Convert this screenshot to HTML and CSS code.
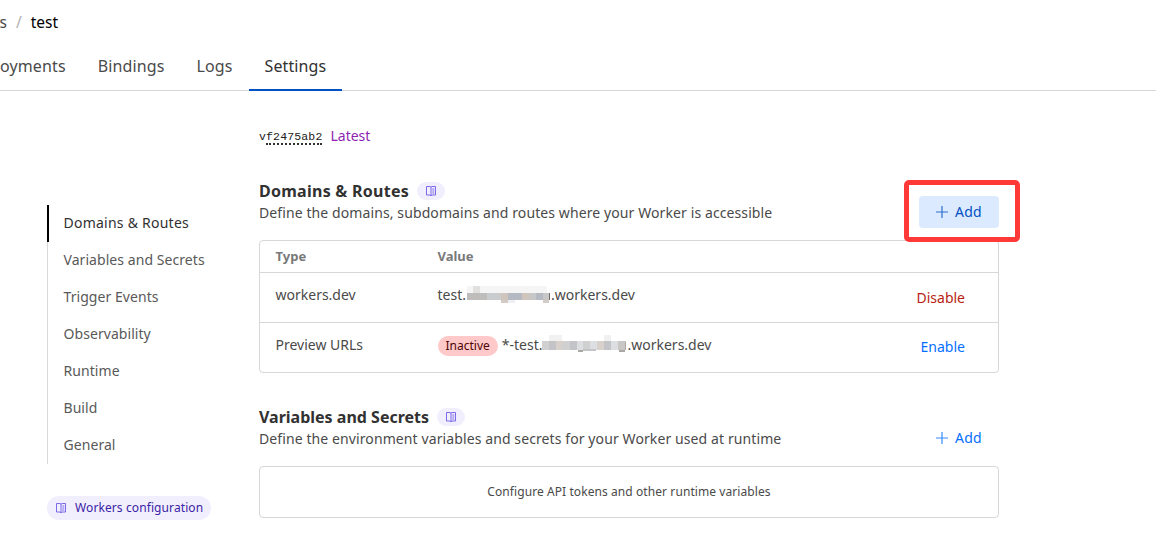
FILE: index.html
```
<!DOCTYPE html>
<html lang="en">
<head>
    <meta charset="UTF-8">
    <meta name="viewport" content="width=device-width, initial-scale=1.0">
    <title>test - Settings</title>
    <link rel="stylesheet" href="styles.css">
</head>
<body>
    <!-- Shared icons -->
    <svg class="sprite" aria-hidden="true">
        <symbol id="icon-book" viewBox="0 0 12 12">
            <path d="M1.500 1.500H5l1 .7 1-.7h3.500v8.500H7l-1 .8-1-.8H1.500zM6 2v8.500" fill="none" stroke="currentColor" stroke-width=".9"/>
            <path d="M7.300 4h2M7.300 6h2M7.300 8h2" stroke="currentColor" stroke-width=".9"/>
        </symbol>
        <symbol id="icon-plus" viewBox="0 0 12 12">
            <path d="M6 0v12M0 6h12" fill="none" stroke="currentColor" stroke-width="1.200"/>
        </symbol>
    </svg>

    <header class="topbar">
        <div class="breadcrumb">
            <span>s</span>
            <span class="slash">/</span>
            <span class="current">test</span>
        </div>
        <nav class="tabs">
            <a class="tab tab-first">oyments</a>
            <a class="tab">Bindings</a>
            <a class="tab">Logs</a>
            <a class="tab active">Settings</a>
        </nav>
    </header>

    <div class="layout">
        <aside class="sidebar">
            <nav class="side-nav">
                <a class="side-link active">Domains &amp; Routes</a>
                <a class="side-link">Variables and Secrets</a>
                <a class="side-link">Trigger Events</a>
                <a class="side-link">Observability</a>
                <a class="side-link">Runtime</a>
                <a class="side-link">Build</a>
                <a class="side-link">General</a>
            </nav>
            <a class="config-link">
                <svg class="icon"><use href="#icon-book"/></svg>
                Workers configuration
            </a>
        </aside>

        <main class="content">
            <div class="version">
                <span class="hash">v<span class="hash-id">f2475ab2</span></span>
                <span class="latest">Latest</span>
            </div>

            <!-- Domains & Routes -->
            <section class="section">
                <div class="section-head">
                    <div>
                        <h2 class="wide">Domains &amp; Routes <span class="doc-badge"><svg class="icon"><use href="#icon-book"/></svg></span></h2>
                        <p>Define the domains, subdomains and routes where your Worker is accessible</p>
                    </div>
                    <button class="add-btn highlighted"><svg class="plus"><use href="#icon-plus"/></svg>Add</button>
                </div>
                <div class="table">
                    <div class="row row-head">
                        <span>Type</span>
                        <span>Value</span>
                    </div>
                    <div class="row">
                        <span>workers.dev</span>
                        <span class="value">test.<svg class="mask" viewBox="0 0 85 18" shape-rendering="crispEdges">
                            <path fill="#f5f5f5" d="M1 1h80v7H1z"/>
                            <path fill="#e2e0df" d="M7 1h7v7H7z"/>
                            <path fill="#bfbdbb" d="M1 8h20v7H1z"/>
                            <path fill="#c9cbcd" d="M21 8h14v7H21z"/>
                            <path fill="#cfc5bd" d="M35 8h7v7h-7zM56 8h7v7h-7z"/>
                            <path fill="#b5bac2" d="M42 8h14v7H42zM70 8h7v7h-7z"/>
                            <path fill="#c7c7c7" d="M63 8h7v7h-7zM77 8h6v7h-6z"/>
                            <path fill="#d4cbc7" d="M35 15h7v3h-7zM77 15h6v3h-6z"/>
                            <path fill="#edf1f6" d="M42 15h7v3h-7z"/>
                            <path fill="#7a6d67" d="M83 8h1v7h-1z"/>
                        </svg>.workers.dev</span>
                        <a class="action disable">Disable</a>
                    </div>
                    <div class="row">
                        <span>Preview URLs</span>
                        <span class="value"><span class="status">Inactive</span>*-test.<svg class="mask" viewBox="0 0 85 18" shape-rendering="crispEdges">
                            <path fill="#f1f1f1" d="M7 0h13v6H7zM62 0h7v6h-7z"/>
                            <path fill="#d0d0d0" d="M0 6h7v9H0zM20 6h8v9h-8zM41 6h7v9h-7z"/>
                            <path fill="#c3c4c7" d="M7 6h7v9H7zM28 6h7v9h-7zM62 6h7v9h-7z"/>
                            <path fill="#d8d0ca" d="M14 6h6v9h-6zM55 6h7v9h-7z"/>
                            <path fill="#dcdee1" d="M35 6h6v9h-6zM48 6h7v9h-7zM69 6h7v9h-7z"/>
                            <path fill="#c8c7c6" d="M76 6h8v9h-8z"/>
                            <path fill="#aaa7a5" d="M36 15h5v2h-5zM77 15h6v2h-6zM83 7h1v8h-1z"/>
                            <path fill="#c3c4c7" d="M41 14h13v2H41z"/>
                        </svg>.workers.dev</span>
                        <a class="action enable">Enable</a>
                    </div>
                </div>
            </section>

            <!-- Variables and Secrets -->
            <section class="section section-last">
                <div class="section-head">
                    <div>
                        <h2>Variables and Secrets <span class="doc-badge"><svg class="icon"><use href="#icon-book"/></svg></span></h2>
                        <p>Define the environment variables and secrets for your Worker used at runtime</p>
                    </div>
                    <button class="add-btn"><svg class="plus"><use href="#icon-plus"/></svg>Add</button>
                </div>
                <div class="empty">Configure API tokens and other runtime variables</div>
            </section>
        </main>
    </div>
</body>
</html>
```
FILE: styles.css
```
* {
    box-sizing: border-box;
}

body {
    font-family: 'Noto Sans', sans-serif;
    font-size: 14px;
    line-height: 20px;
    margin: 0;
    background: #fff;
    color: #4a4a4a;
}

.sprite {
    display: none;
}

.topbar {
    height: 91px;
    border-bottom: 1px solid #d5d7d8;
}

.breadcrumb {
    display: flex;
    gap: 9px;
    height: 43px;
    align-items: center;
    font-size: 15.5px;
    margin-left: -0.5px;
}

.slash {
    color: #b0b0b0;
}

.current {
    color: #000;
}

.tabs {
    display: flex;
    height: 48px;
}

.tab {
    padding: 13px 16px 0;
    font-size: 16px;
    letter-spacing: 0.12px;
    border-bottom: 2px solid transparent;
}

.tab-first {
    padding-left: 0;
}

.tab.active {
    color: #313131;
    border-bottom-color: #0051c3;
}

.layout {
    display: grid;
    grid-template-columns: 212px 740px;
    padding-left: 47px;
}

/* Sidebar */
.sidebar {
    padding-top: 114px;
}

.side-nav {
    border-left: 1px solid #d9d9d9;
    height: 259px;
}

.side-link {
    display: block;
    height: 37px;
    line-height: 36px;
    padding-left: 15.5px;
    color: #595959;
    letter-spacing: 0.06px;
}

.side-link.active {
    margin-left: -1px;
    border-left: 2px solid #000;
    padding-left: 14.5px;
    color: #313131;
    letter-spacing: 0.24px;
}

.config-link {
    display: inline-flex;
    align-items: center;
    gap: 8px;
    height: 24px;
    margin-top: 32px;
    padding: 0 8px;
    border-radius: 12px;
    background: #f1effe;
    color: #3a23a5;
    font-size: 12px;
    letter-spacing: 0.1px;
}

.icon {
    width: 12px;
    height: 12px;
    color: #6e5ae6;
}

/* Content */
.version {
    display: flex;
    align-items: center;
    gap: 8px;
    height: 20px;
    margin-top: 35px;
}

.hash {
    font-family: 'Liberation Mono', monospace;
    font-size: 11.5px;
    letter-spacing: 0.15px;
    color: #222;
    line-height: 12px;
    padding-top: 2px;
}

.hash-id {
    border-bottom: 2px dotted #313131;
}

.latest {
    color: #8e1fb0;
}

.section {
    height: 226px;
    padding-top: 35px;
}

.section-last {
    height: auto;
}

.section-head {
    display: flex;
    justify-content: space-between;
    height: 59px;
}

h2 {
    display: flex;
    align-items: center;
    gap: 8px;
    height: 20px;
    margin: 0;
    font-size: 16px;
    font-weight: 700;
    color: #313131;
}

h2.wide {
    letter-spacing: 0.26px;
}

p {
    margin: 2px 0 0;
    letter-spacing: 0.1px;
}

.doc-badge {
    display: flex;
    align-items: center;
    justify-content: center;
    width: 28px;
    height: 18px;
    border-radius: 9px;
    background: #f1effe;
}

.add-btn {
    position: relative;
    display: flex;
    align-items: center;
    gap: 7px;
    width: 80px;
    height: 32px;
    margin-top: 15px;
    padding: 0 0 0 17px;
    border: 0;
    border-radius: 4px;
    background: none;
    color: #056fff;
    font: inherit;
    letter-spacing: 0.2px;
}

.add-btn.highlighted {
    background: #dceaff;
    color: #0051c3;
}

/* Marker frame around the button */
.add-btn.highlighted::after {
    content: '';
    position: absolute;
    top: -16px;
    left: -15px;
    width: 106px;
    height: 52px;
    border: 5px solid #ff3838;
    border-radius: 5px;
}

.plus {
    width: 12px;
    height: 12px;
    opacity: 0.8;
}

.table,
.empty {
    border: 1px solid #d5d7d8;
    border-radius: 4px;
}

.row {
    display: grid;
    grid-template-columns: 162px 1fr auto;
    height: 50px;
    padding: 12px 33px 0 15.5px;
    border-top: 1px solid #d5d7d8;
}

.row-head {
    height: 31px;
    padding-top: 5px;
    border-top: 0;
    font-size: 13px;
    font-weight: 700;
    color: #797979;
}

.value {
    display: flex;
}

.mask {
    width: 85px;
    height: 18px;
}

.status {
    height: 20px;
    margin: 1px 4px 0 0;
    padding: 0 8px;
    border-radius: 10px;
    background: #ffc9c9;
    color: #4e0505;
    font-size: 12px;
}

.action {
    padding-top: 2px;
}

.disable {
    padding-top: 3px;
    color: #b81d13;
}

.enable {
    color: #056fff;
}

.empty {
    display: flex;
    align-items: center;
    justify-content: center;
    height: 52px;
    font-size: 12px;
    letter-spacing: 0.08px;
}
```
